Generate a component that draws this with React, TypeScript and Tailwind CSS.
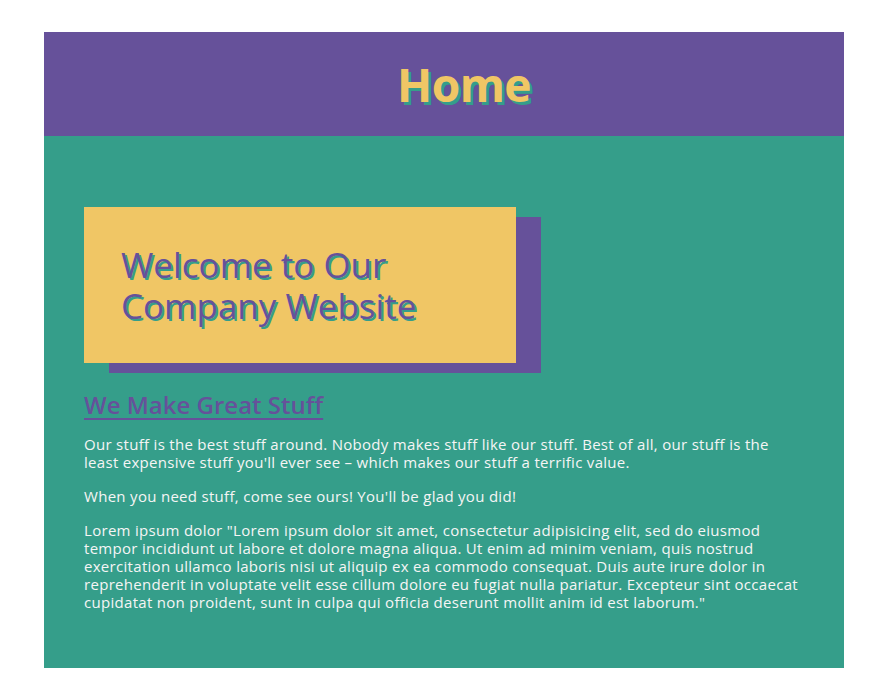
export default function App() {
  return (
    <div className="min-h-screen bg-white pt-8 font-['Open_Sans',sans-serif]">
      <div className="ml-[44px] w-[800px]">
        <header className="flex h-[104px] items-center justify-center bg-[#66519a] pl-10">
          <h1 className="text-[46px] font-bold leading-none tracking-[-0.5px] text-[#f0c665] [text-shadow:3px_3px_0_#359e8a]">
            Home
          </h1>
        </header>

        <main className="bg-[#359e8a] px-10 pt-[71px] pb-[57px] text-[15px] leading-[18px] tracking-[0.3px] text-[#f5f5f5]">
          <div className="relative w-[432px]">
            <div className="absolute left-[25px] top-[10px] h-full w-full bg-[#66519a]" />
            <div className="relative bg-[#f0c665] px-[37px] py-[37px]">
              <h2 className="text-[35px] leading-[41px] tracking-normal text-[#66519a] [text-shadow:2px_2px_0_#359e8a]">
                Welcome to Our Company Website
              </h2>
            </div>
          </div>

          <h3 className="mt-[28px] mb-4 text-[24px] font-semibold leading-7 tracking-normal text-[#66519a] underline underline-offset-4">
            We Make Great Stuff
          </h3>

          <p className="mb-4">
            Our stuff is the best stuff around. Nobody makes stuff like our stuff. Best of all, our
            stuff is the least expensive stuff you'll ever see – which makes our stuff a terrific value.
          </p>
          <p className="mb-4">When you need stuff, come see ours! You'll be glad you did!</p>
          <p>
            Lorem ipsum dolor "Lorem ipsum dolor sit amet, consectetur adipisicing elit, sed do eiusmod
            tempor incididunt ut labore et dolore magna aliqua. Ut enim ad minim veniam, quis nostrud
            exercitation ullamco laboris nisi ut aliquip ex ea commodo consequat. Duis aute irure dolor in
            reprehenderit in voluptate velit esse cillum dolore eu fugiat nulla pariatur. Excepteur sint
            occaecat cupidatat non proident, sunt in culpa qui officia deserunt mollit anim id est
            laborum."
          </p>
        </main>
      </div>
    </div>
  );
}
